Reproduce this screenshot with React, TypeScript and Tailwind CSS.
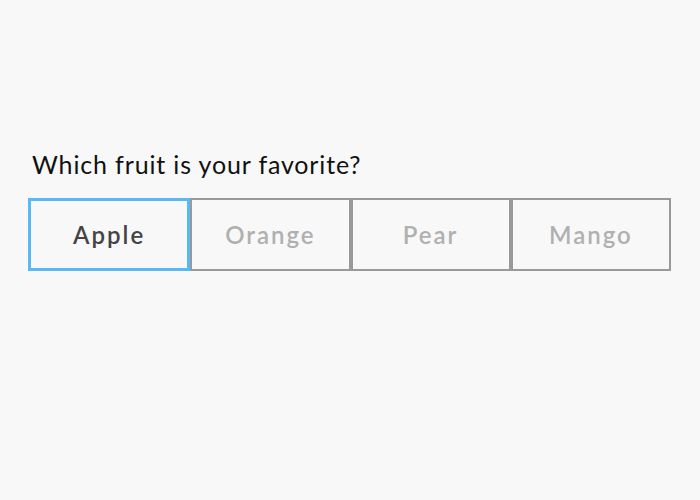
import React, { useState } from "react";

const fruits = ["Apple", "Orange", "Pear", "Mango"];

export default function App() {
  const [selected, setSelected] = useState("Apple");
  return (
    <div
      className="w-[700px] h-[500px] bg-[#f8f8f8] pt-[148px] pl-[28px] pr-[29px]"
      style={{ fontFamily: "Lato, 'Open Sans', sans-serif" }}
    >
      <p className="text-[25px] leading-[32px] tracking-[0.85px] text-[#111] pl-[4px] mb-[18px]">
        Which fruit is your favorite?
      </p>
      <div className="flex">
        {fruits.map((f) => (
          <button
            key={f}
            onClick={() => setSelected(f)}
            className={
              f === selected
                ? "flex-1 h-[73px] border-[3px] border-[#5ab8f5] text-[#444] text-[24px] tracking-[2px] font-semibold"
                : "flex-1 h-[73px] border-2 border-[#999] text-[#b0b0b0] text-[24px] tracking-[2px] font-semibold"
            }
          >
            {f}
          </button>
        ))}
      </div>
    </div>
  );
}
